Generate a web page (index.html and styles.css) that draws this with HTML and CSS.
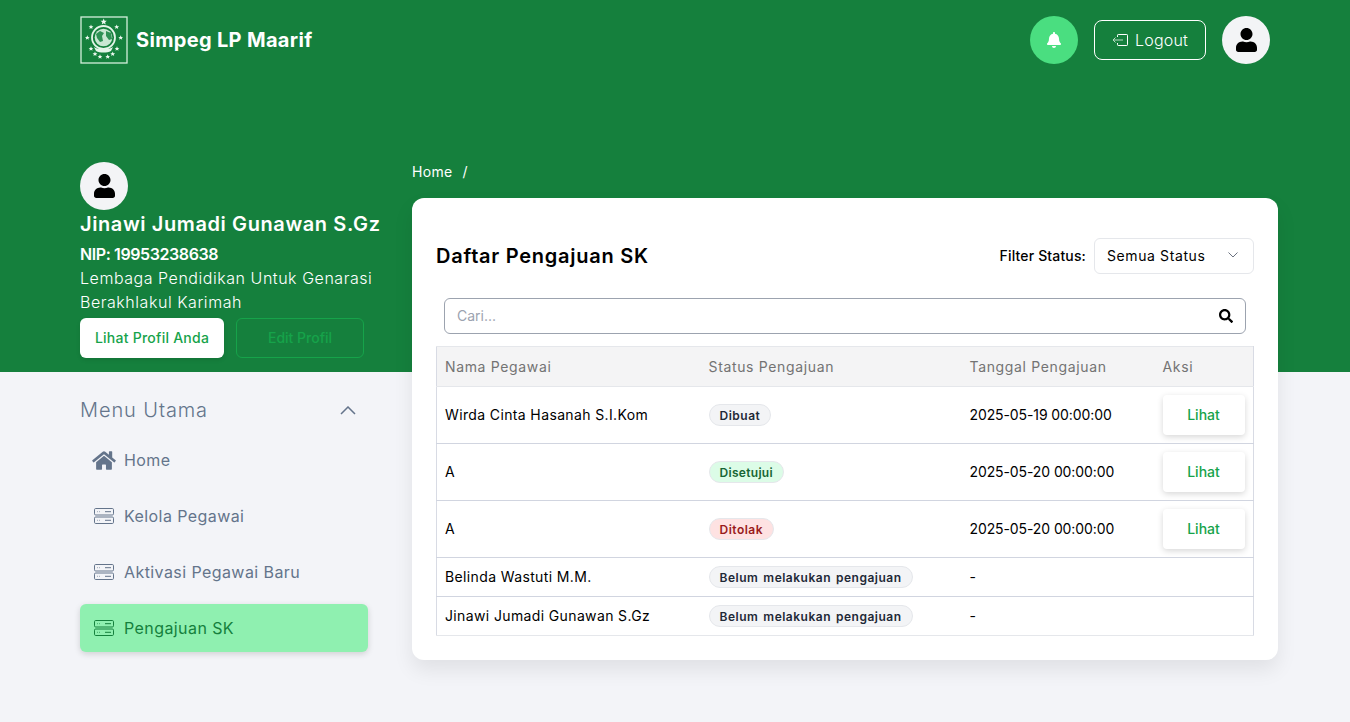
FILE: index.html
```html
<!DOCTYPE html>
<html lang="id">
<head>
    <meta charset="UTF-8">
    <meta name="viewport" content="width=device-width, initial-scale=1.0">
    <title>Simpeg LP Maarif</title>
    <link rel="stylesheet" href="styles.css">
</head>
<body>
    <!-- Top bar -->
    <header class="topbar">
        <div class="brand">
            <svg class="brand-logo" viewBox="0 0 48 48">
                <defs>
                    <polygon id="star" points="0,-2.400 .7,-.7 2.400,-.7 1.100,.4 1.500,2.100 0,1.100 -1.500,2.100 -1.100,.4 -2.400,-.7 -.7,-.7"/>
                </defs>
                <rect x="1" y="1" width="46" height="46" fill="#15803d" stroke="#d5efdc" stroke-width="1.300"/>
                <g fill="#eef9f1">
                    <use href="#star" transform="translate(23.700 5.700) scale(1.300)"/>
                    <use href="#star" x="11" y="11"/>
                    <use href="#star" x="36.700" y="11"/>
                    <use href="#star" x="7.300" y="21.700"/>
                    <use href="#star" x="40.700" y="21.700"/>
                    <use href="#star" x="11" y="32.700"/>
                    <use href="#star" x="37" y="32.700"/>
                    <use href="#star" x="15" y="38"/>
                    <use href="#star" x="32.700" y="38"/>
                    <use href="#star" x="20" y="40.700"/>
                    <use href="#star" x="27.700" y="40.700"/>
                </g>
                <circle cx="23.500" cy="21.500" r="11.500" fill="none" stroke="#e4f5e9" stroke-width="1.800"/>
                <circle cx="23.500" cy="21.500" r="8.800" fill="#c9e8d3"/>
                <path fill="#2f9155" d="M16 18l4-3 4 2-2 3 1 5-3 1-3-4zM26 15l5 2 1 6-3 1-3-4z"/>
                <path fill="#e4f5e9" d="M14 31c4 3 15 3 19 0l-2 4c-4 2-11 2-15 0z"/>
            </svg>
            <span class="brand-name">Simpeg LP Maarif</span>
        </div>
        <div class="topbar-actions">
            <button class="bell-btn">
                <svg class="bell-icon" viewBox="0 0 448 512"><path d="M224 512c35.32 0 63.97-28.65 63.97-64H160.03c0 35.35 28.65 64 63.97 64zm215.39-149.71c-19.32-20.76-55.47-51.99-55.47-154.29 0-77.7-54.48-139.9-127.94-155.16V32c0-17.67-14.32-32-31.98-32s-31.98 14.33-31.98 32v20.84C118.56 68.1 64.08 130.3 64.08 208c0 102.3-36.15 133.53-55.47 154.29-6 6.45-8.66 14.16-8.61 21.71.11 16.4 12.98 32 32.1 32h383.8c19.12 0 32-15.6 32.1-32 .05-7.55-2.61-15.27-8.61-21.71z"/></svg>
            </button>
            <button class="logout-btn">
                <svg class="logout-icon" viewBox="0 0 16 12">
                    <path class="logout-box" d="M5.500 3V1.200a.7.7 0 0 1 .7-.7h8.600a.7.7 0 0 1 .7.7v9.600a.7.7 0 0 1-.7.700H6.200a.7.7 0 0 1-.7-.7V9"/>
                    <path class="logout-arrow" d="M11 6H1M3.500 3.500L1 6l2.500 2.500"/>
                </svg>
                Logout
            </button>
            <div class="avatar">
                <svg class="avatar-icon" viewBox="0 0 448 512"><path d="M224 256c70.7 0 128-57.3 128-128S294.7 0 224 0 96 57.3 96 128s57.3 128 128 128zm89.6 32h-16.7c-22.2 10.2-46.9 16-72.9 16s-50.6-5.8-72.9-16h-16.7C60.2 288 0 348.2 0 422.4V464c0 26.5 21.500 48 48 48h352c26.500 0 48-21.500 48-48v-41.600c0-74.200-60.200-134.400-134.400-134.400z"/></svg>
            </div>
        </div>
    </header>

    <div class="page">
        <!-- Sidebar -->
        <aside class="sidebar">
            <div class="profile">
                <div class="avatar">
                    <svg class="avatar-icon" viewBox="0 0 448 512"><path d="M224 256c70.7 0 128-57.3 128-128S294.7 0 224 0 96 57.3 96 128s57.3 128 128 128zm89.6 32h-16.7c-22.2 10.2-46.9 16-72.9 16s-50.6-5.8-72.9-16h-16.7C60.2 288 0 348.2 0 422.4V464c0 26.5 21.500 48 48 48h352c26.500 0 48-21.500 48-48v-41.600c0-74.200-60.200-134.400-134.400-134.400z"/></svg>
                </div>
                <h2 class="profile-name">Jinawi Jumadi Gunawan S.Gz</h2>
                <div class="profile-nip">NIP: 19953238638</div>
                <div class="profile-org">Lembaga Pendidikan Untuk Genarasi Berakhlakul Karimah</div>
                <div class="profile-buttons">
                    <button class="btn-profile">Lihat Profil Anda</button>
                    <button class="btn-edit" disabled>Edit Profil</button>
                </div>
            </div>

            <div class="menu-head">
                <span>Menu Utama</span>
                <svg class="menu-chevron" viewBox="0 0 16 9"><path d="M1 8l7-7 7 7"/></svg>
            </div>
            <nav class="menu">
                <a class="menu-item">
                    <svg class="menu-home" viewBox="0 0 576 512"><path d="M280.37 148.26L96 300.11V464a16 16 0 0 0 16 16l112.06-.29a16 16 0 0 0 15.92-16V368a16 16 0 0 1 16-16h64a16 16 0 0 1 16 16v95.64a16 16 0 0 0 16 16.05L464 480a16 16 0 0 0 16-16V300L295.67 148.26a12.19 12.19 0 0 0-15.3 0zM571.6 251.47L488 182.56V44.05a12 12 0 0 0-12-12h-56a12 12 0 0 0-12 12v72.61L318.47 43a48 48 0 0 0-61 0L4.34 251.47a12 12 0 0 0-1.6 16.9l25.5 31A12 12 0 0 0 45.15 301l235.22-193.74a12.19 12.19 0 0 1 15.3 0L530.9 301a12 12 0 0 0 16.9-1.6l25.5-31a12 12 0 0 0-1.7-16.93z"/></svg>
                    Home
                </a>
                <a class="menu-item">
                    <svg class="menu-icon" viewBox="0 0 20 16"><rect x="0.5" y="0.5" width="19" height="6.500" rx="1.200"/><rect x="0.500" y="9" width="19" height="6.500" rx="1.200"/><path d="M3 3.700h.6M5 3.700h.6M11 3.700h6M3 12.300h.6M5 12.300h.6M11 12.300h6"/></svg>
                    Kelola Pegawai
                </a>
                <a class="menu-item">
                    <svg class="menu-icon" viewBox="0 0 20 16"><rect x="0.5" y="0.5" width="19" height="6.500" rx="1.200"/><rect x="0.500" y="9" width="19" height="6.500" rx="1.200"/><path d="M3 3.700h.6M5 3.700h.6M11 3.700h6M3 12.300h.6M5 12.300h.6M11 12.300h6"/></svg>
                    Aktivasi Pegawai Baru
                </a>
                <a class="menu-item active">
                    <svg class="menu-icon" viewBox="0 0 20 16"><rect x="0.5" y="0.5" width="19" height="6.500" rx="1.200"/><rect x="0.500" y="9" width="19" height="6.500" rx="1.200"/><path d="M3 3.700h.6M5 3.700h.6M11 3.700h6M3 12.300h.6M5 12.300h.6M11 12.300h6"/></svg>
                    Pengajuan SK
                </a>
            </nav>
        </aside>

        <!-- Main content -->
        <main class="content">
            <div class="breadcrumb"><span>Home</span><span>/</span></div>
            <section class="card">
                <div class="card-head">
                    <h1 class="card-title">Daftar Pengajuan SK</h1>
                    <div class="filter">
                        <label class="filter-label">Filter Status:</label>
                        <div class="filter-select">
                            Semua Status
                            <svg class="select-chevron" viewBox="0 0 10 6"><path d="M.5.500L5 5 9.500.500"/></svg>
                        </div>
                    </div>
                </div>

                <div class="search">
                    <span class="search-placeholder">Cari...</span>
                    <svg class="search-icon" viewBox="0 0 512 512"><path d="M505 442.700L405.300 343c-4.500-4.500-10.600-7-17-7H372c27.600-35.300 44-79.700 44-128C416 93.100 322.900 0 208 0S0 93.100 0 208s93.100 208 208 208c48.300 0 92.700-16.400 128-44v16.300c0 6.400 2.500 12.500 7 17l99.700 99.700c9.400 9.400 24.600 9.400 33.900 0l28.300-28.300c9.400-9.400 9.400-24.600.1-34zM208 336c-70.700 0-128-57.200-128-128 0-70.700 57.200-128 128-128 70.700 0 128 57.200 128 128 0 70.700-57.200 128-128 128z"/></svg>
                </div>

                <table class="sk-table">
                    <colgroup>
                        <col class="col-name"><col class="col-status"><col class="col-date"><col class="col-action">
                    </colgroup>
                    <thead>
                        <tr><th>Nama Pegawai</th><th>Status Pengajuan</th><th>Tanggal Pengajuan</th><th>Aksi</th></tr>
                    </thead>
                    <tbody>
                        <tr>
                            <td class="cell-name">Wirda Cinta Hasanah S.I.Kom</td>
                            <td><span class="badge badge-gray">Dibuat</span></td>
                            <td class="cell-date">2025-05-19 00:00:00</td>
                            <td><button class="btn-lihat">Lihat</button></td>
                        </tr>
                        <tr>
                            <td class="cell-name">A</td>
                            <td><span class="badge badge-green">Disetujui</span></td>
                            <td class="cell-date">2025-05-20 00:00:00</td>
                            <td><button class="btn-lihat">Lihat</button></td>
                        </tr>
                        <tr>
                            <td class="cell-name">A</td>
                            <td><span class="badge badge-red">Ditolak</span></td>
                            <td class="cell-date">2025-05-20 00:00:00</td>
                            <td><button class="btn-lihat">Lihat</button></td>
                        </tr>
                        <tr>
                            <td class="cell-name">Belinda Wastuti M.M.</td>
                            <td><span class="badge badge-gray">Belum melakukan pengajuan</span></td>
                            <td class="cell-date">-</td>
                            <td></td>
                        </tr>
                        <tr>
                            <td class="cell-name">Jinawi Jumadi Gunawan S.Gz</td>
                            <td><span class="badge badge-gray">Belum melakukan pengajuan</span></td>
                            <td class="cell-date">-</td>
                            <td></td>
                        </tr>
                    </tbody>
                </table>
            </section>
        </main>
    </div>
</body>
</html>
```

FILE: styles.css
```css
* {
    box-sizing: border-box;
}
body {
    margin: 0;
    height: 722px;
    overflow: hidden;
    font-family: Inter, "Open Sans", sans-serif;
    color: #000;
    background: linear-gradient(#15803d 372px, #f3f4f8 372px);
}
button {
    font-family: inherit;
    cursor: pointer;
}

/* top bar */
.topbar {
    height: 80px;
    padding: 16px 80px;
    display: flex;
    justify-content: space-between;
    align-items: center;
}
.brand {
    display: flex;
    align-items: center;
    gap: 8px;
}
.brand-logo {
    width: 48px;
    height: 48px;
}
.brand-name {
    color: #fff;
    font-size: 20px;
    font-weight: 700;
    letter-spacing: 0.33px;
}
.topbar-actions {
    display: flex;
    align-items: center;
    gap: 16px;
}
.bell-btn {
    width: 48px;
    height: 48px;
    border: none;
    border-radius: 50%;
    background: #4ade80;
    display: flex;
    align-items: center;
    justify-content: center;
}
.bell-icon {
    width: 14px;
    height: 16px;
    fill: #fff;
}
.logout-btn {
    width: 112px;
    height: 40px;
    border: 1px solid #fff;
    border-radius: 8px;
    background: transparent;
    color: #fff;
    font-size: 16px;
    font-weight: 300;
    letter-spacing: 0.2px;
    display: flex;
    align-items: center;
    justify-content: center;
    gap: 7px;
}
.logout-icon {
    width: 16px;
    height: 12px;
    fill: none;
    stroke-width: 1;
}
.logout-box {
    stroke: #fff;
}
.logout-arrow {
    stroke: #b8dcc4;
}
.avatar {
    width: 48px;
    height: 48px;
    border-radius: 50%;
    background: #f3f4f6;
    display: flex;
    align-items: center;
    justify-content: center;
}
.avatar-icon {
    width: 21px;
    height: 24px;
    fill: #000;
}

/* page columns */
.page {
    padding: 82px 0 0 80px;
    display: flex;
    gap: 44px;
}
.sidebar {
    width: 288px;
    flex-shrink: 0;
}
.content {
    width: 866px;
}

/* sidebar */
.profile {
    height: 210px;
    color: #fff;
}
.profile-name {
    margin: 2px 0 0;
    width: 310px;
    font-size: 20px;
    line-height: 24px;
    font-weight: 600;
    white-space: nowrap;
    letter-spacing: 0.6px;
}
.profile-nip {
    margin-top: 6px;
    font-size: 16px;
    line-height: 24px;
    font-weight: 600;
    letter-spacing: -0.4px;
}
.profile-org {
    font-size: 16px;
    line-height: 24px;
    font-weight: 300;
    width: 300px;
    letter-spacing: 0.54px;
    white-space: normal;
}
.profile-buttons {
    margin-top: 4px;
    display: flex;
    gap: 12px;
}
.btn-profile {
    width: 144px;
    height: 40px;
    padding: 0 0 2px;
    border: none;
    border-radius: 6px;
    background: #fff;
    color: #16a34a;
    font-size: 14px;
    font-weight: 500;
    letter-spacing: 0.25px;
    box-shadow: 0 2px 4px rgba(0, 0, 0, 0.1);
}
.btn-edit {
    width: 128px;
    height: 40px;
    padding: 0 0 2px;
    border: 1px solid #16a34a;
    border-radius: 6px;
    background: transparent;
    color: #16a34a;
    font-size: 14px;
    font-weight: 500;
    cursor: default;
}
.menu-head {
    margin-top: 26px;
    height: 24px;
    padding-right: 12px;
    display: flex;
    justify-content: space-between;
    align-items: center;
    color: #64748b;
    font-size: 20px;
    font-weight: 300;
    letter-spacing: 0.9px;
}
.menu-chevron {
    width: 16px;
    height: 9px;
    fill: none;
    stroke: #64748b;
    stroke-width: 1.500;
}
.menu {
    margin-top: 14px;
    display: flex;
    flex-direction: column;
    gap: 8px;
}
.menu-item {
    height: 48px;
    padding-left: 12px;
    border-radius: 6px;
    display: flex;
    align-items: center;
    gap: 8px;
    color: #64748b;
    font-size: 16px;
    letter-spacing: 0.42px;
}
.menu-home {
    width: 24px;
    height: 21px;
    fill: #64748b;
}
.menu-icon {
    width: 20px;
    height: 16px;
    margin: 0 2px;
    fill: none;
    stroke: #64748b;
    stroke-width: 1;
}
.menu-item.active {
    background: #8ff0b0;
    color: #15803d;
    box-shadow: 0 2px 6px rgba(0, 0, 0, 0.15);
}
.menu-item.active .menu-icon {
    stroke: #15803d;
}

/* breadcrumb */
.breadcrumb {
    height: 36px;
    display: flex;
    gap: 10px;
    color: #fff;
    font-size: 14px;
    line-height: 20px;
    letter-spacing: 0.3px;
}

/* card */
.card {
    height: 462px;
    padding: 40px 24px 0;
    background: #fff;
    border-radius: 12px;
    box-shadow: 0 10px 20px rgba(0, 0, 0, 0.08);
}
.card-head {
    height: 36px;
    display: flex;
    justify-content: space-between;
    align-items: center;
}
.card-title {
    margin: 0;
    font-size: 20px;
    font-weight: 600;
    letter-spacing: 0.74px;
}
.filter {
    display: flex;
    align-items: center;
    gap: 8px;
}
.filter-label {
    padding-bottom: 2px;
    font-size: 14px;
    font-weight: 500;
    letter-spacing: 0.15px;
}
.filter-select {
    width: 160px;
    height: 36px;
    padding: 0 15px 2px 12px;
    border: 1px solid #e5e7eb;
    border-radius: 6px;
    display: flex;
    justify-content: space-between;
    align-items: center;
    font-size: 14px;
    letter-spacing: 0.6px;
}
.select-chevron {
    width: 10px;
    height: 6px;
    fill: none;
    stroke: #6b7280;
    stroke-width: 1;
}
.search {
    margin: 24px 8px 12px;
    height: 36px;
    padding: 0 12px;
    border: 1px solid #9ca3af;
    border-radius: 6px;
    display: flex;
    justify-content: space-between;
    align-items: center;
}
.search-placeholder {
    padding-bottom: 2px;
    color: #9ca3af;
    font-size: 14px;
}
.search-icon {
    width: 14px;
    height: 14px;
}

/* table */
.sk-table {
    width: 817px;
    table-layout: fixed;
    border-collapse: collapse;
    font-size: 14px;
}
.col-name {
    width: 264px;
}
.col-status {
    width: 261px;
}
.col-date {
    width: 193px;
}
.col-action {
    width: 99px;
}
.sk-table th,
.sk-table td {
    padding: 0 8px;
    border-top: 1px solid #e5e7eb;
    border-bottom: 1px solid #d1d5e0;
    text-align: left;
    white-space: nowrap;
}
.sk-table th:first-child,
.sk-table td:first-child {
    border-left: 1px solid #d8dbe4;
}
.sk-table th:last-child,
.sk-table td:last-child {
    border-right: 1px solid #d8dbe4;
}
.sk-table th {
    height: 40px;
    background: #f4f4f5;
    color: #737373;
    font-weight: 400;
    letter-spacing: 0.65px;
    border-color: #e5e7eb;
}
.sk-table td {
    letter-spacing: 0.37px;
}
.sk-table td.cell-name,
.sk-table td.cell-date {
    padding-bottom: 2px;
}
.sk-table td.cell-date {
    letter-spacing: -0.1px;
}
.sk-table tbody tr {
    height: 39px;
}
.sk-table tbody tr:nth-child(-n+3) {
    height: 57px;
}
.sk-table tbody tr:last-child td {
    border-bottom-color: #e5e7eb;
}
.badge {
    display: inline-block;
    padding: 0 10px;
    height: 22px;
    line-height: 21px;
    border: 1px solid #e5e7eb;
    border-radius: 11px;
    font-size: 12px;
    font-weight: 600;
    letter-spacing: 0.5px;
    word-spacing: 1.5px;
    vertical-align: middle;
}
.badge-gray {
    background: #f3f4f6;
    color: #1f2937;
}
.badge-green {
    background: #dcfce7;
    color: #166534;
    letter-spacing: 0.3px;
}
.badge-red {
    background: #fee2e2;
    color: #991b1b;
}
.btn-lihat {
    display: block;
    width: 82px;
    height: 40px;
    padding: 0 0 2px;
    border: none;
    border-radius: 4px;
    background: #fff;
    color: #16a34a;
    font-size: 14px;
    font-weight: 500;
    box-shadow: 0 2px 6px rgba(0, 0, 0, 0.16);
}
```
